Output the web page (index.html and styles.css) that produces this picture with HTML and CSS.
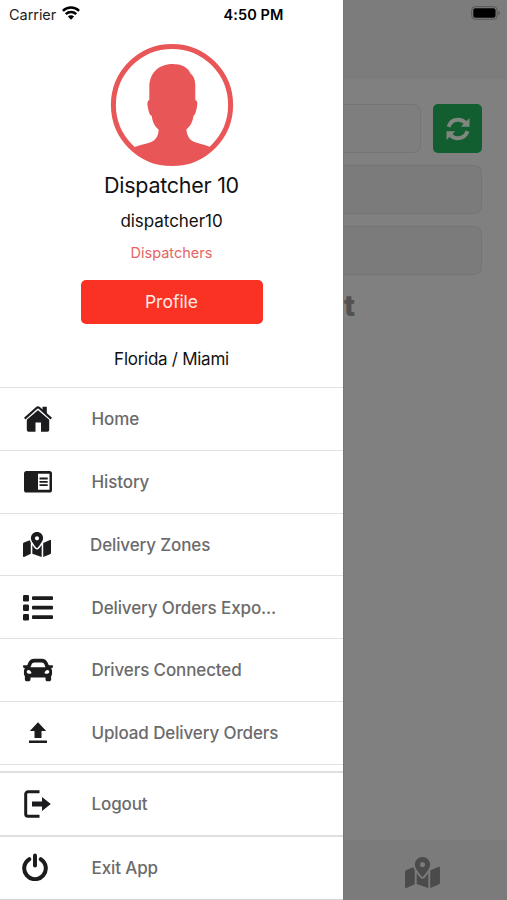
FILE: index.html
```html
<!DOCTYPE html>
<html lang="en">
<head>
<meta charset="utf-8">
<title>Dispatcher menu</title>
<link rel="stylesheet" href="styles.css">
</head>
<body>
<svg class="defs" aria-hidden="true">
  <symbol id="map" viewBox="0 0 576 512"><path d="M288 0c-69.59 0-126 56.41-126 126 0 56.26 82.35 158.8 113.9 196.02 6.39 7.54 17.82 7.54 24.2 0C331.65 284.8 414 182.26 414 126 414 56.41 357.59 0 288 0zm0 168c-23.2 0-42-18.8-42-42s18.8-42 42-42 42 18.8 42 42-18.8 42-42 42zM20.12 215.95A32.006 32.006 0 0 0 0 245.66v250.32c0 11.32 11.43 19.06 21.94 14.86L160 448V214.92c-8.84-15.98-16.07-31.54-21.25-46.42L20.12 215.95zM288 359.67c-14.07 0-27.38-6.18-36.51-16.96-19.66-23.2-40.57-49.62-59.49-76.72v182l192 64V266c-18.92 27.09-39.82 53.52-59.49 76.72-9.13 10.77-22.44 16.95-36.51 16.95zm266.06-198.51L416 224v288l139.88-55.95A31.996 31.996 0 0 0 576 426.34V176.02c0-11.32-11.43-19.06-21.94-14.86z"/></symbol>
</svg>
<div class="screen">
  <aside class="drawer">
    <div class="status">
      <span class="carrier">Carrier</span>
      <svg class="wifi" width="18" height="14" viewBox="0 0 18 14"><g fill="none" stroke="#000" stroke-width="2.5"><path d="M.9 4.8a11.6 11.6 0 0 1 16.2 0"/><path d="M3.8 8.1a7.4 7.4 0 0 1 10.4 0"/></g><path d="M9 13.7 5.9 10.5a4.4 4.4 0 0 1 6.2 0z"/></svg>
      <span class="clock">4:50 PM</span>
    </div>
    <section class="profile">
      <svg class="avatar" width="124" height="124" viewBox="0 0 124 124">
        <defs><clipPath id="disc"><circle cx="62" cy="62" r="60"/></clipPath></defs>
        <path clip-path="url(#disc)" d="M62.500 21C71 21 78 24 80.500 30.500C84 33 85.500 38 85.300 44V57C87.800 57.500 87.500 61 86.800 65C86 69 84.800 72 83.400 73C82.800 79 80 83.500 76.300 86.500C77 93 80 98 86 99.500C92 101.500 96 102 100 104L98 124H26L25 104C29 102 34 101.500 40 99.500C46 97.500 48.500 92.500 48.600 86.500C44.500 83 42.500 79 41.800 73C39.500 72 38.800 69 38 65C37 61 37 58 39.300 57V44C39.300 30 49 21 62.500 21Z"/>
        <circle cx="62" cy="62" r="58.600" fill="none" stroke="#e95657" stroke-width="5"/>
      </svg>
      <h1 class="name">Dispatcher 10</h1>
      <p class="login">dispatcher10</p>
      <p class="role">Dispatchers</p>
      <button class="profile-btn">Profile</button>
      <p class="place">Florida / Miami</p>
    </section>
    <nav class="menu">
      <a class="item"><span class="icon"><svg width="28" height="28" viewBox="0 0 28 28"><path d="M2.800 14 14 4.500 25.200 14v11a1.800 1.800 0 0 1-1.800 1.800H17v-9.300h-5.500v9.300H4.600A1.800 1.800 0 0 1 2.800 25zM18.500 1.800h4.300V10l-4.300-3.500z"/><path d="M.8 14.800 14 3.600l13.200 11.200" fill="none" stroke="#fff" stroke-width="2.500"/><path d="M.7 13.600 12.600 3a2.100 2.100 0 0 1 2.800 0l11.900 10.600" fill="none" stroke="#1c1c1e" stroke-width="2.300"/></svg></span><span class="label">Home</span></a>
      <a class="item"><span class="icon"><svg width="28" height="22" viewBox="0 0 28 22"><path fill-rule="evenodd" d="M2.600 0h22.800A2.600 2.600 0 0 1 28 2.600v16.300a2.600 2.600 0 0 1-2.600 2.600H2.600A2.600 2.600 0 0 1 0 18.900V2.600A2.600 2.600 0 0 1 2.600 0zM14 2.800v16h11.500v-16zM15.500 6.600h8.200v1.900h-8.200zm0 3.300h8.200v1.900h-8.200zm0 3.300h8.200v1.900h-8.200z"/></svg></span><span class="label">History</span></a>
      <a class="item"><span class="icon zones"><svg width="28" height="25"><use href="#map"/></svg></span><span class="label zones-label">Delivery Zones</span></a>
      <a class="item"><span class="icon"><svg width="30" height="26" viewBox="0 0 30 26"><rect y="0" width="6" height="6.500" rx="1.200"/><rect y="9.500" width="6" height="6.500" rx="1.200"/><rect y="19" width="6" height="6.500" rx="1.200"/><rect x="9" y="1.300" width="21" height="3.800" rx="1"/><rect x="9" y="10.800" width="21" height="3.800" rx="1"/><rect x="9" y="20.300" width="21" height="3.800" rx="1"/></svg></span><span class="label">Delivery Orders Expo...</span></a>
      <a class="item"><span class="icon"><svg width="30" height="30" viewBox="0 0 512 512"><path d="M499.990 176h-59.870l-16.640-41.600C406.380 91.630 365.570 64 319.500 64h-127c-46.060 0-86.880 27.630-103.990 70.400L71.870 176H12.010C4.200 176-1.530 183.340.37 190.910l6 24C7.700 220.250 12.500 224 18.010 224h20.070C24.650 235.730 16 252.780 16 272v48c0 16.120 6.160 30.670 16 41.930V416c0 17.670 14.330 32 32 32h32c17.670 0 32-14.330 32-32v-32h256v32c0 17.670 14.330 32 32 32h32c17.670 0 32-14.330 32-32v-54.070c9.840-11.250 16-25.800 16-41.930v-48c0-19.220-8.650-36.270-22.070-48H494c5.510 0 10.310-3.750 11.640-9.090l6-24c1.890-7.570-3.840-14.910-11.650-14.910zm-352.060-17.830c7.290-18.220 24.940-30.170 44.570-30.170h127c19.630 0 37.280 11.950 44.570 30.170L384 208H128l19.930-49.830zM96 319.800c-19.200 0-32-12.760-32-31.900S76.800 256 96 256s48 28.710 48 47.850-28.800 15.950-48 15.950zm320 0c-19.200 0-48 3.190-48-15.950S396.800 256 416 256s32 12.760 32 31.900-12.800 31.900-32 31.900z"/></svg></span><span class="label">Drivers Connected</span></a>
      <a class="item"><span class="icon"><svg width="18" height="22" viewBox="0 0 18 22"><path d="M9 .3 17.200 9H12.500v7h-7V9H.8zM0 18.600h18v2.500H0z"/></svg></span><span class="label">Upload Delivery Orders</span></a>
    </nav>
    <nav class="footer">
      <a class="item"><span class="icon"><svg width="28" height="28" viewBox="0 0 28 28"><path d="M15.500 1.800H4a2.300 2.300 0 0 0-2.300 2.300v19.800A2.300 2.300 0 0 0 4 26.200h11.500" fill="none" stroke="#1c1c1e" stroke-width="3"/><path d="M8 11.500h10V7l8.800 7-8.800 7v-4.500H8z"/></svg></span><span class="label">Logout</span></a>
      <a class="item"><span class="icon power"><svg width="26" height="28" viewBox="0 0 26 28"><g fill="none" stroke="#1c1c1e" stroke-width="4" stroke-linecap="round"><path d="M7.300 6.200a10.800 10.800 0 1 0 11.400 0"/><path d="M13 2.500v10"/></g></svg></span><span class="label">Exit App</span></a>
    </nav>
  </aside>
  <main class="page">
    <header class="topbar"><svg width="30" height="14" viewBox="0 0 30 14"><rect x=".7" y=".7" width="25.500" height="12.600" rx="3.500" fill="none" stroke="#555"/><rect x="2.300" y="2.300" width="22.200" height="9.400" rx="2" fill="#000"/><path d="M27.500 4.500q3 2.500 0 5z" fill="#555"/></svg></header>
    <div class="content">
      <div class="search"><div class="field"></div><button class="refresh" aria-label="Refresh"><svg width="24" height="24" viewBox="0 0 24 24"><g fill="none" stroke="#7f877f" stroke-width="4"><path d="M2.500 9.800C4 5.300 7.600 2.800 12 2.800c3.200 0 5.700 1.100 7.800 3.300"/><path d="M21.500 14.200c-1.500 4.500-5.100 7-9.500 7-3.200 0-5.700-1.100-7.800-3.300"/></g><path d="M23.500 1v8.700h-8.700zM.5 23v-8.700h8.700z"/></svg></button></div>
      <div class="field"></div>
      <div class="field"></div>
      <div class="heading">t</div>
    </div>
    <footer class="tabbar"><svg width="35" height="31"><use href="#map"/></svg></footer>
  </main>
</div>
</body>
</html>
```
FILE: styles.css
```css
* { box-sizing: border-box; }
body { margin: 0; font-family: Inter, "Liberation Sans", sans-serif; overflow: hidden; }
.defs { position: absolute; width: 0; height: 0; }
svg { display: block; flex: none; }
.screen { display: grid; grid-template-columns: 343px 1fr; height: 900px; background: #808080; }
.drawer { background: #fff; height: 900px; overflow: hidden; display: flex; flex-direction: column; }
.status { height: 28px; display: flex; align-items: center; padding-left: 9px; flex: none; white-space: nowrap; }
.carrier { font-size: 14.5px; width: 53px; color: #222; letter-spacing: -0.05px; }
.clock { font-size: 14.5px; font-weight: 600; margin-left: 143.5px; letter-spacing: 0.1px; }
.wifi { margin-top: -2px; }
.profile { height: 359px; flex: none; display: flex; flex-direction: column; align-items: center; padding-top: 15px; }
.avatar { fill: #e95657; }
.name, .login, .role, .place { margin: 0; font-weight: 400; color: #111; white-space: nowrap; }
.name { font-size: 21.5px; line-height: 37px; letter-spacing: -0.27px; }
.login { font-size: 17px; line-height: 35px; letter-spacing: -0.05px; }
.role { font-size: 14.5px; line-height: 28px; color: #e66465; }
.profile-btn { width: 182px; height: 44px; margin-top: 13px; border: 0; border-radius: 5px; background: #f93224; color: #ffe9e4; font: 400 17.5px/44px Inter, sans-serif; padding: 0; }
.place { font-size: 17px; line-height: 30px; margin-top: 20px; letter-spacing: -0.27px; }
.menu { height: 384px; flex: none; }
.item { height: 62.750px; display: flex; align-items: center; border-top: 1px solid #e0e1e2; }
.menu .item:last-child { height: 63.750px; border-bottom: 1px solid #e0e1e2; }
.icon { width: 75px; display: flex; justify-content: center; fill: #1c1c1e; }
.menu .icon { padding-top: 1px; }
.zones { padding-right: 2px; }
.power { padding: 0 5px 2px 0; }
.label { font-size: 17px; font-weight: 500; color: #6b6b6c; margin-left: 16.500px; letter-spacing: -0.12px; white-space: nowrap; }
.menu .label { padding-top: 1px; }
.zones-label { margin-left: 15px; }
.footer { height: 129px; flex: none; border-bottom: 1px solid #d5d6d7; }
.footer .item { height: 64px; border-top: 2px solid #dcdfdf; }
.page { display: flex; flex-direction: column; height: 900px; border-left: 1px solid #777; }
.topbar { height: 79px; background: #7c7c7c; padding: 6px 6px 0 0; display: flex; justify-content: flex-end; flex: none; }
.content { flex: 1; padding: 25px 25px 0 0; display: flex; flex-direction: column; gap: 12px; }
.search { display: flex; gap: 12px; }
.field { height: 49px; border: 1px solid #757575; border-left: 0; border-radius: 0 8px 8px 0; background: #7b7b7b; }
.search .field { flex: 1; background: #7e7e7e; }
.refresh { width: 49px; height: 49px; border: 0; border-radius: 5px; background: #135e31; fill: #7f877f; display: grid; place-items: center; padding: 0; }
.heading { font-size: 29px; line-height: 38px; font-weight: 800; color: #515151; }
.tabbar { height: 60px; background: #7b7b7b; display: flex; justify-content: center; padding: 17px 6px 0 0; fill: #4b4b4b; flex: none; }
```
